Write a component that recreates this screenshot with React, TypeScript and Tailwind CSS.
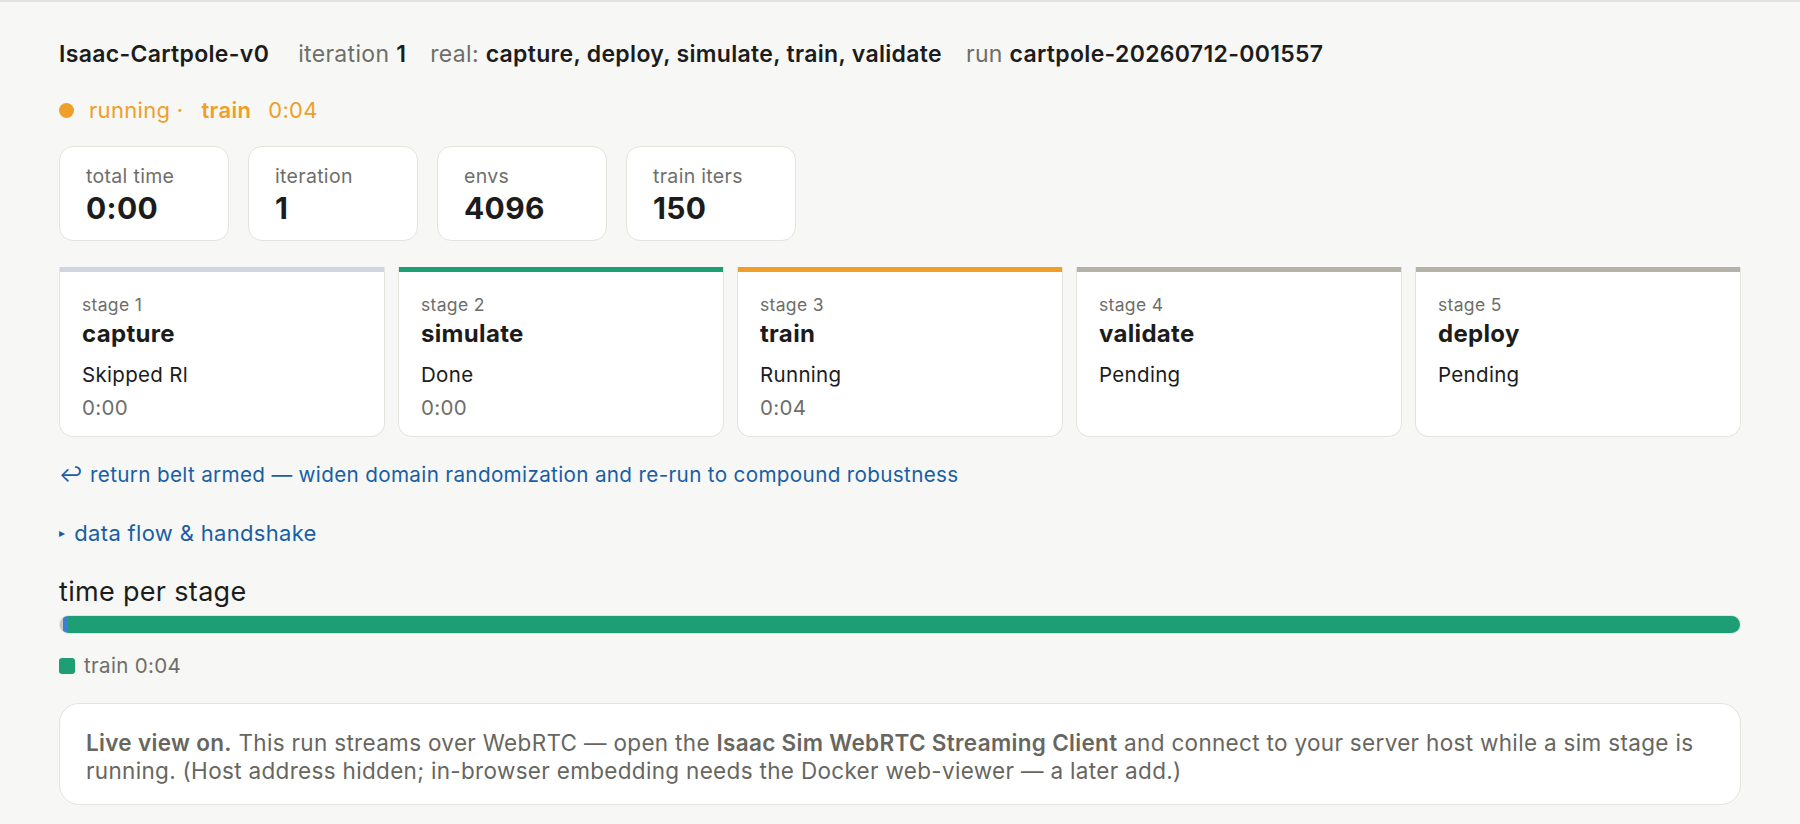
import React from "react";

type Stage = {
  n: number;
  name: string;
  status: string;
  time?: string;
  bar: string;
};

const stages: Stage[] = [
  { n: 1, name: "capture", status: "Skipped Rl", time: "0:00", bar: "bg-[#cfd5dc]" },
  { n: 2, name: "simulate", status: "Done", time: "0:00", bar: "bg-[#1d9e75]" },
  { n: 3, name: "train", status: "Running", time: "0:04", bar: "bg-[#ef9f27]" },
  { n: 4, name: "validate", status: "Pending", bar: "bg-[#b4b2a9]" },
  { n: 5, name: "deploy", status: "Pending", bar: "bg-[#b4b2a9]" },
];

const metrics = [
  { label: "total time", value: "0:00" },
  { label: "iteration", value: "1" },
  { label: "envs", value: "4096" },
  { label: "train iters", value: "150" },
];

const MetaItem = ({ label, value }: { label?: string; value: string }) => (
  <span className="mr-[24px]">
    {label && <span className="text-[#6e6e69]">{label} </span>}
    <span className="font-semibold text-[#1c1c1c]">{value}</span>
  </span>
);

export default function App() {
  return (
    <div
      className="min-h-[824px] border-t-2 border-[#e3e3de] bg-[#f7f7f5] px-[59px] pt-[38px] tracking-[0.02em] text-[#1c1c1c]"
      style={{ fontFamily: "Inter, 'Noto Sans', sans-serif" }}
    >
      {/* run meta */}
      <div className="flex items-center text-[23px] leading-[28px]">
        <span className="mr-[29px] font-semibold">Isaac-Cartpole-v0</span>
        <MetaItem label="iteration" value="1" />
        <MetaItem label="real:" value="capture, deploy, simulate, train, validate" />
        <MetaItem label="run" value="cartpole-20260712-001557" />
      </div>

      {/* status */}
      <div className="mt-[28px] flex items-center text-[22px] leading-[28px] text-[#ef9f27]">
        <span className="mr-[15px] h-[15px] w-[15px] rounded-full bg-[#ef9f27]" />
        <span className="mr-[18px]">running ·</span>
        <span className="mr-[17px] font-semibold">train</span>
        <span>0:04</span>
      </div>

      {/* metrics */}
      <div className="mt-[22px] flex gap-[19px]">
        {metrics.map((m) => (
          <div
            key={m.label}
            className="h-[95px] w-[170px] rounded-[14px] border border-[#e4e3de] bg-white px-[26px] pt-[17px]"
          >
            <div className="text-[19.5px] leading-[24px] text-[#6e6e69]">{m.label}</div>
            <div className="mt-[2px] text-[30px] font-bold leading-[36px]">{m.value}</div>
          </div>
        ))}
      </div>

      {/* stages */}
      <div className="mt-[26px] grid grid-cols-5 gap-[13px]">
        {stages.map((s) => (
          <div
            key={s.n}
            className="h-[170px] overflow-hidden rounded-b-[14px] border-x border-b border-[#e4e3de] bg-white"
          >
            <div className={`h-[5px] ${s.bar}`} />
            <div className="px-[22px] pt-[21px]">
              <div className="text-[17.5px] leading-[24px] text-[#6e6e69]">stage {s.n}</div>
              <div className="mt-[2px] text-[24px] font-bold leading-[30px]">{s.name}</div>
              <div className="mt-[12px] text-[20.5px] leading-[28px]">{s.status}</div>
              {s.time && (
                <div className="mt-[5px] text-[20.5px] leading-[28px] text-[#6e6e69]">{s.time}</div>
              )}
            </div>
          </div>
        ))}
      </div>

      {/* links */}
      <div className="mt-[24px] text-[20.7px] leading-[28px] text-[#185fa5]">
        <span className="mr-[7px]">↩</span>return belt armed — widen domain randomization and re-run to compound robustness
      </div>
      <div className="mt-[30px] flex items-center text-[22px] leading-[28px] text-[#185fa5]">
        <span className="mr-[9px] text-[12px]">▸</span>data flow &amp; handshake
      </div>

      {/* time per stage */}
      <div className="mt-[29px] text-[27px] leading-[32px]">time per stage</div>
      <div className="mt-[7px] flex h-[19px] overflow-hidden rounded-full border border-[#e4e3de] bg-[#d9d8d2]">
        <div className="w-[3px] bg-[#c7c6c0]" />
        <div className="w-[5px] bg-[#3b7fd4]" />
        <div className="flex-1 bg-[#1d9e75]" />
      </div>
      <div className="mt-[18px] flex items-center text-[20.5px] leading-[28px] text-[#6e6e69]">
        <span className="mr-[9px] h-[16px] w-[16px] rounded-[3px] bg-[#1d9e75]" />
        train 0:04
      </div>

      {/* notice */}
      <div className="mt-[23px] rounded-[20px] border border-[#e4e3de] bg-white px-[26px] pb-[19px] pt-[25px] text-[22.5px] leading-[28px] text-[#67665f]">
        <span className="font-semibold">Live view on.</span> This run streams over WebRTC — open the{" "}
        <span className="font-semibold">Isaac Sim WebRTC Streaming Client</span> and connect to your server host
        while a sim stage is running. (Host address hidden; in-browser embedding needs the Docker web-viewer — a
        later add.)
      </div>
    </div>
  );
}
